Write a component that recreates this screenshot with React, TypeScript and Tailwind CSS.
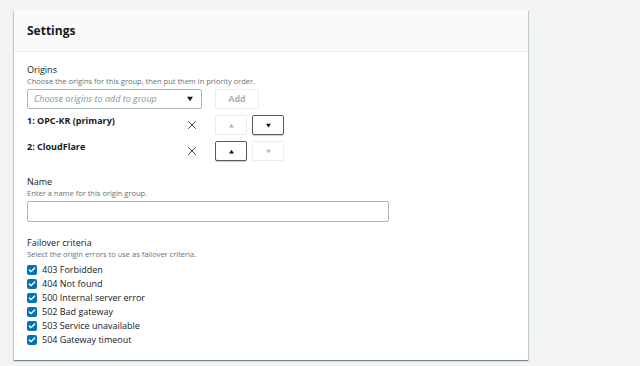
import { X, Check } from "lucide-react";

const criteria = [
  "403 Forbidden",
  "404 Not found",
  "500 Internal server error",
  "502 Bad gateway",
  "503 Service unavailable",
  "504 Gateway timeout",
];

function Tri({ up, className }: { up?: boolean; className: string }) {
  return (
    <svg viewBox="0 0 10 8" className={className} fill="currentColor" aria-hidden="true">
      {up ? <path d="M5 1l4 6H1z" /> : <path d="M1 1h8L5 7z" />}
    </svg>
  );
}

function MoveButton({ up, enabled }: { up?: boolean; enabled: boolean }) {
  return (
    <button
      className={
        "flex h-[20px] w-[32px] items-center justify-center rounded-[2px] bg-white " +
        (enabled
          ? "border border-[#545b64] text-[#16191f] shadow-[0_1px_1px_rgba(0,0,0,0.2)]"
          : "border border-[#eaeded] text-[#aab7b8]")
      }
    >
      <Tri up={up} className="h-[5px] w-[7px]" />
    </button>
  );
}

export default function App() {
  return (
    <div
      className="min-h-[366px] bg-[#f2f3f3] pt-[10px] pl-[14px]"
      style={{ fontFamily: '"Open Sans", "Noto Sans", sans-serif' }}
    >
      <div className="w-[514px] bg-white shadow-[0_1px_1px_rgba(0,28,36,0.3),1px_1px_1px_rgba(0,28,36,0.15),-1px_1px_1px_rgba(0,28,36,0.15)]">
        <div className="flex h-[42px] items-center border-b border-[#eaeded] bg-[#fafafa] px-[13px]">
          <h2 className="text-[12px] font-bold text-[#16191f]">Settings</h2>
        </div>

        <div className="px-[13px] pt-[12px] pb-[13px] text-[#16191f]">
          <div className="text-[9px] leading-[12px]">Origins</div>
          <div className="text-[7.5px] leading-[11px] text-[#687078]">
            Choose the origins for this group, then put them in priority order.
          </div>
          <div className="mt-[2px] flex items-center gap-[13px]">
            <div className="flex h-[20px] w-[175px] items-center justify-between rounded-[2px] border border-[#aab7b8] pl-[6px] pr-[7px]">
              <span className="text-[9px] italic text-[#879596]">Choose origins to add to group</span>
              <Tri className="h-[6px] w-[8px] text-[#16191f]" />
            </div>
            <button className="flex h-[20px] w-[44px] items-center justify-center rounded-[2px] border border-[#eaeded] text-[9px] font-bold text-[#aab7b8]">
              Add
            </button>
          </div>

          <div className="mt-[6px] flex h-[20px] items-center">
            <div className="w-[158px] -translate-y-[4px] text-[9px] font-bold">1: OPC-KR (primary)</div>
            <X className="h-[14px] w-[14px] text-[#16191f]" strokeWidth={1.4} />
            <div className="ml-[16px] flex gap-[5px]">
              <MoveButton up enabled={false} />
              <MoveButton enabled />
            </div>
          </div>
          <div className="mt-[6px] flex h-[20px] items-center">
            <div className="w-[158px] -translate-y-[4px] text-[9px] font-bold">2: CloudFlare</div>
            <X className="h-[14px] w-[14px] text-[#16191f]" strokeWidth={1.4} />
            <div className="ml-[16px] flex gap-[5px]">
              <MoveButton up enabled />
              <MoveButton enabled={false} />
            </div>
          </div>

          <div className="mt-[15px] text-[9px] leading-[12px]">Name</div>
          <div className="text-[7.5px] leading-[11px] text-[#687078]">Enter a name for this origin group.</div>
          <div className="mt-[2px] h-[21px] w-[362px] rounded-[2px] border border-[#aab7b8]" />

          <div className="mt-[15px] text-[9px] leading-[12px]">Failover criteria</div>
          <div className="text-[7.5px] leading-[11px] text-[#687078]">
            Select the origin errors to use as failover criteria.
          </div>
          <div className="mt-[3px] flex flex-col">
            {criteria.map((c) => (
              <label key={c} className="flex h-[14px] items-center gap-[5px]">
                <span className="flex h-[10px] w-[10px] items-center justify-center rounded-[2px] bg-[#0073bb]">
                  <Check className="h-[8px] w-[8px] text-white" strokeWidth={4} />
                </span>
                <span className="text-[9px]">{c}</span>
              </label>
            ))}
          </div>
        </div>
      </div>
    </div>
  );
}
